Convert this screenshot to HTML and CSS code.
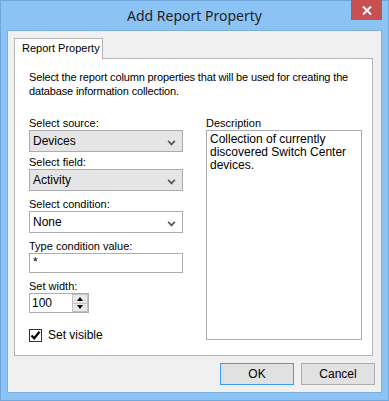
FILE: index.html
```html
<!DOCTYPE html>
<html lang="en">
<head>
    <meta charset="UTF-8">
    <title>Add Report Property</title>
    <link rel="stylesheet" href="styles.css">
</head>
<body>
    <div class="window">
        <div class="titlebar">
            <span class="title">Add Report Property</span>
        </div>
        <!-- window control, sits over the title bar -->
        <div class="close-btn">
            <svg width="10" height="9" viewBox="0 0 10 9">
                <path d="M1 0.5 L9 8.5 M9 0.5 L1 8.5" stroke="#fff" stroke-width="2"/>
            </svg>
        </div>

        <div class="client">
            <div class="tabs">
                <div class="tab active">Report Property</div>
            </div>
            <div class="tab-page">
                <p class="intro">Select the report column properties that will be used for creating the<br>database information collection.</p>

                <div class="columns">
                    <div class="left">
                        <div class="field">
                            <label>Select source:</label>
                            <div class="combo flat">Devices<span class="arrow"></span></div>
                        </div>
                        <div class="field">
                            <label>Select field:</label>
                            <div class="combo flat">Activity<span class="arrow"></span></div>
                        </div>
                        <div class="field wide-gap">
                            <label>Select condition:</label>
                            <div class="combo">None<span class="arrow"></span></div>
                        </div>
                        <div class="field wide-gap">
                            <label>Type condition value:</label>
                            <div class="textbox">*</div>
                        </div>
                        <div class="field wide-gap">
                            <label>Set width:</label>
                            <div class="numeric">
                                <span class="num-value">100</span>
                                <div class="spin">
                                    <span class="spin-btn"><i class="tri up"></i></span>
                                    <span class="spin-btn"><i class="tri down"></i></span>
                                </div>
                            </div>
                        </div>
                        <div class="check-row">
                            <span class="checkbox">
                                <svg width="11" height="11" viewBox="0 0 11 11">
                                    <path d="M1.5 5.5 L4.2 8.3 L9.5 1.8" fill="none" stroke="#000" stroke-width="2.2"/>
                                </svg>
                            </span>
                            <span>Set visible</span>
                        </div>
                    </div>

                    <div class="right">
                        <label>Description</label>
                        <div class="description">Collection of currently discovered Switch Center devices.</div>
                    </div>
                </div>
            </div>

            <div class="button-row">
                <button class="btn default">OK</button>
                <button class="btn">Cancel</button>
            </div>
        </div>
    </div>
</body>
</html>
```

FILE: styles.css
```css
body {
    margin: 0;
    font-family: "Liberation Sans", Arial, sans-serif;
    font-size: 11px;
    color: #000;
}
.window {
    position: relative;
    width: 389px;
    height: 401px;
    box-sizing: border-box;
    background-color: #8cc3f5;
    border: 1px solid #6fa7db;
    display: flex;
    flex-direction: column;
}
.titlebar {
    height: 29px;
    display: flex;
    align-items: center;
    justify-content: center;
}
.title {
    font-family: "Noto Sans", sans-serif;
    font-size: 14px;
    color: #1f1f1f;
    margin-top: -1px;
}
.close-btn {
    position: absolute;
    top: -1px;
    right: 6px;
    width: 31px;
    height: 20px;
    background-color: #c75050;
    display: flex;
    align-items: center;
    justify-content: center;
}
.client {
    flex: 1;
    margin: 0 6px 7px 6px;
    border: 1px solid #80afda;
    background-color: #f0f0f0;
    padding: 7px 8px 0 6px;
    display: flex;
    flex-direction: column;
}
.tabs {
    display: flex;
}
.tab {
    position: relative;
    z-index: 1;
    width: 89px;
    height: 21px;
    box-sizing: border-box;
    padding: 3px 0 0 7px;
    border: 1px solid #b4b4b4;
    border-bottom: none;
    background-color: #fff;
    margin-bottom: -1px;
}
.tab-page {
    height: 298px;
    box-sizing: border-box;
    border: 1px solid #b4b4b4;
    background-color: #fff;
    padding: 11px 10px 0 14px;
}
.intro {
    margin: 0;
    line-height: 14px;
    letter-spacing: -0.15px;
}
.columns {
    display: flex;
    margin-top: 18px;
}
.left {
    width: 154px;
}
.right {
    margin-left: 23px;
    display: flex;
    flex-direction: column;
}
label {
    display: block;
    line-height: 14px;
}
.field + .field {
    margin-top: 3px;
}
.field.wide-gap {
    margin-top: 6px;
}
.combo, .textbox {
    position: relative;
    box-sizing: border-box;
    height: 22px;
    border: 1px solid #abadb3;
    background-color: #fff;
    padding: 0 3px;
    line-height: 20px;
    font-size: 12px;
}
.combo.flat {
    background-color: #e5e5e5;
    border-color: #acacac;
}
.arrow {
    position: absolute;
    right: 7px;
    top: 7px;
    width: 5px;
    height: 5px;
    border-right: 2px solid #555;
    border-bottom: 2px solid #555;
    transform: rotate(45deg) scale(0.8);
}
.textbox {
    height: 20px;
    line-height: 16px;
}
.numeric {
    width: 60px;
    height: 20px;
    box-sizing: border-box;
    border: 1px solid #abadb3;
    display: flex;
    font-size: 12px;
}
.num-value {
    flex: 1;
    padding-left: 2px;
    line-height: 18px;
}
.spin {
    width: 16px;
    display: flex;
    flex-direction: column;
}
.spin-btn {
    flex: 1;
    background-color: #e8e8e8;
    border: 1px solid #c2c2c2;
    display: flex;
    align-items: center;
    justify-content: center;
}
.spin-btn + .spin-btn {
    border-top: none;
}
.tri {
    width: 0;
    height: 0;
    border-left: 3px solid transparent;
    border-right: 3px solid transparent;
}
.tri.up {
    border-bottom: 4px solid #000;
}
.tri.down {
    border-top: 4px solid #000;
}
.check-row {
    display: flex;
    align-items: center;
    margin-top: 15px;
    font-size: 12px;
}
.checkbox {
    width: 13px;
    height: 13px;
    box-sizing: border-box;
    border: 1px solid #333;
    margin-right: 6px;
    display: flex;
    align-items: center;
    justify-content: center;
}
.description {
    width: 156px;
    height: 210px;
    box-sizing: border-box;
    border: 1px solid #abadb3;
    padding: 2px 3px;
    line-height: 13px;
    font-size: 12px;
}
.button-row {
    display: flex;
    justify-content: flex-end;
    gap: 7px;
    margin-top: 7px;
    margin-right: -2px;
}
.btn {
    width: 74px;
    height: 22px;
    font-family: "Liberation Sans", Arial, sans-serif;
    font-size: 12px;
    background-color: #e1e1e1;
    border: 1px solid #adadad;
    padding: 0;
}
.btn.default {
    border-color: #3c9cf4;
}
```
